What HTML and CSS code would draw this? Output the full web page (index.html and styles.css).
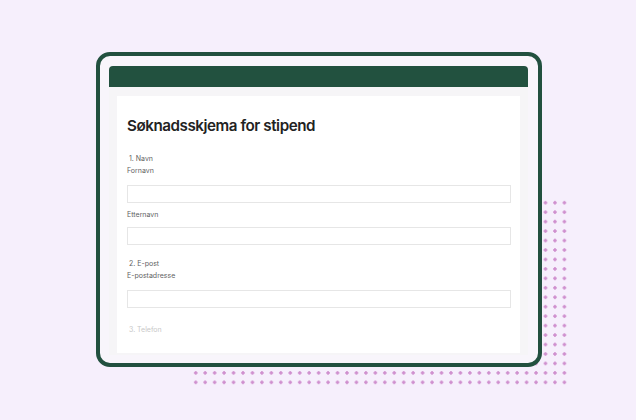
FILE: index.html
```html
<!DOCTYPE html>
<html lang="no">
<head>
<meta charset="utf-8">
<link rel="stylesheet" href="styles.css">
</head>
<body>
<div class="scene">
  <div class="dots"></div>
  <div class="frame">
    <div class="topbar"></div>
    <div class="panel">
      <div class="card">
        <h1 class="title">Søknadsskjema for stipend</h1>
        <div class="q">&nbsp;1. Navn</div>
        <div class="lbl">Fornavn</div>
        <div class="field"></div>
        <div class="lbl lbl-gap">Etternavn</div>
        <div class="field field-tight"></div>
        <div class="q q-gap">&nbsp;2. E-post</div>
        <div class="lbl">E-postadresse</div>
        <div class="field field-mid"></div>
        <div class="q q-faded">&nbsp;3. Telefon</div>
      </div>
    </div>
  </div>
</div>
</body>
</html>
```

FILE: styles.css
```css
html, body {
  margin: 0;
  padding: 0;
}
body {
  width: 636px;
  height: 420px;
  background: #f6effc;
  overflow: hidden;
  font-family: "Inter", "Liberation Sans", sans-serif;
}
.scene {
  position: relative;
  width: 636px;
  height: 420px;
  padding: 52px 0 0 96px;
  box-sizing: border-box;
}
.dots {
  position: absolute;
  left: 190.6px;
  top: 198.3px;
  width: 378.4px;
  height: 189.2px;
  background-image: radial-gradient(circle at 4.73px 4.73px, #cf8fce 1.4px, transparent 1.9px);
  background-size: 9.46px 9.46px;
}
.frame {
  position: relative;
  width: 446px;
  height: 315px;
  box-sizing: border-box;
  border: 4px solid #22503f;
  border-radius: 14px;
  background: #f8f5fb;
  padding: 10px 10px 0 9px;
}
.topbar {
  height: 21px;
  background: #22513f;
  border-radius: 4px 4px 0 0;
}
.panel {
  background: #f6f5f7;
  padding: 9px 8px 2px 8px;
}
.card {
  background: #ffffff;
  height: 257px;
  box-sizing: border-box;
  padding: 20px 9px 0 10px;
  color: #555;
}
.title {
  margin: 0;
  font-family: "Inter", "Liberation Sans", sans-serif;
  font-size: 15.2px;
  line-height: 20px;
  font-weight: 600;
  letter-spacing: -0.45px;
  color: #222;
}
.q {
  margin-top: 17px;
  font-size: 7px;
  line-height: 12px;
  color: #5f5f5f;
}
.q-gap {
  margin-top: 13px;
}
.q-faded {
  margin-top: 16px;
  color: #c8c8c8;
}
.lbl {
  font-size: 7px;
  line-height: 12px;
  color: #5f5f5f;
}
.lbl-gap {
  margin-top: 6px;
}
.field {
  margin-top: 8px;
  height: 18px;
  box-sizing: border-box;
  border: 1px solid #e6e6e6;
  background: #fff;
}
.field-tight {
  margin-top: 6px;
}
.field-mid {
  margin-top: 7.5px;
}
```
